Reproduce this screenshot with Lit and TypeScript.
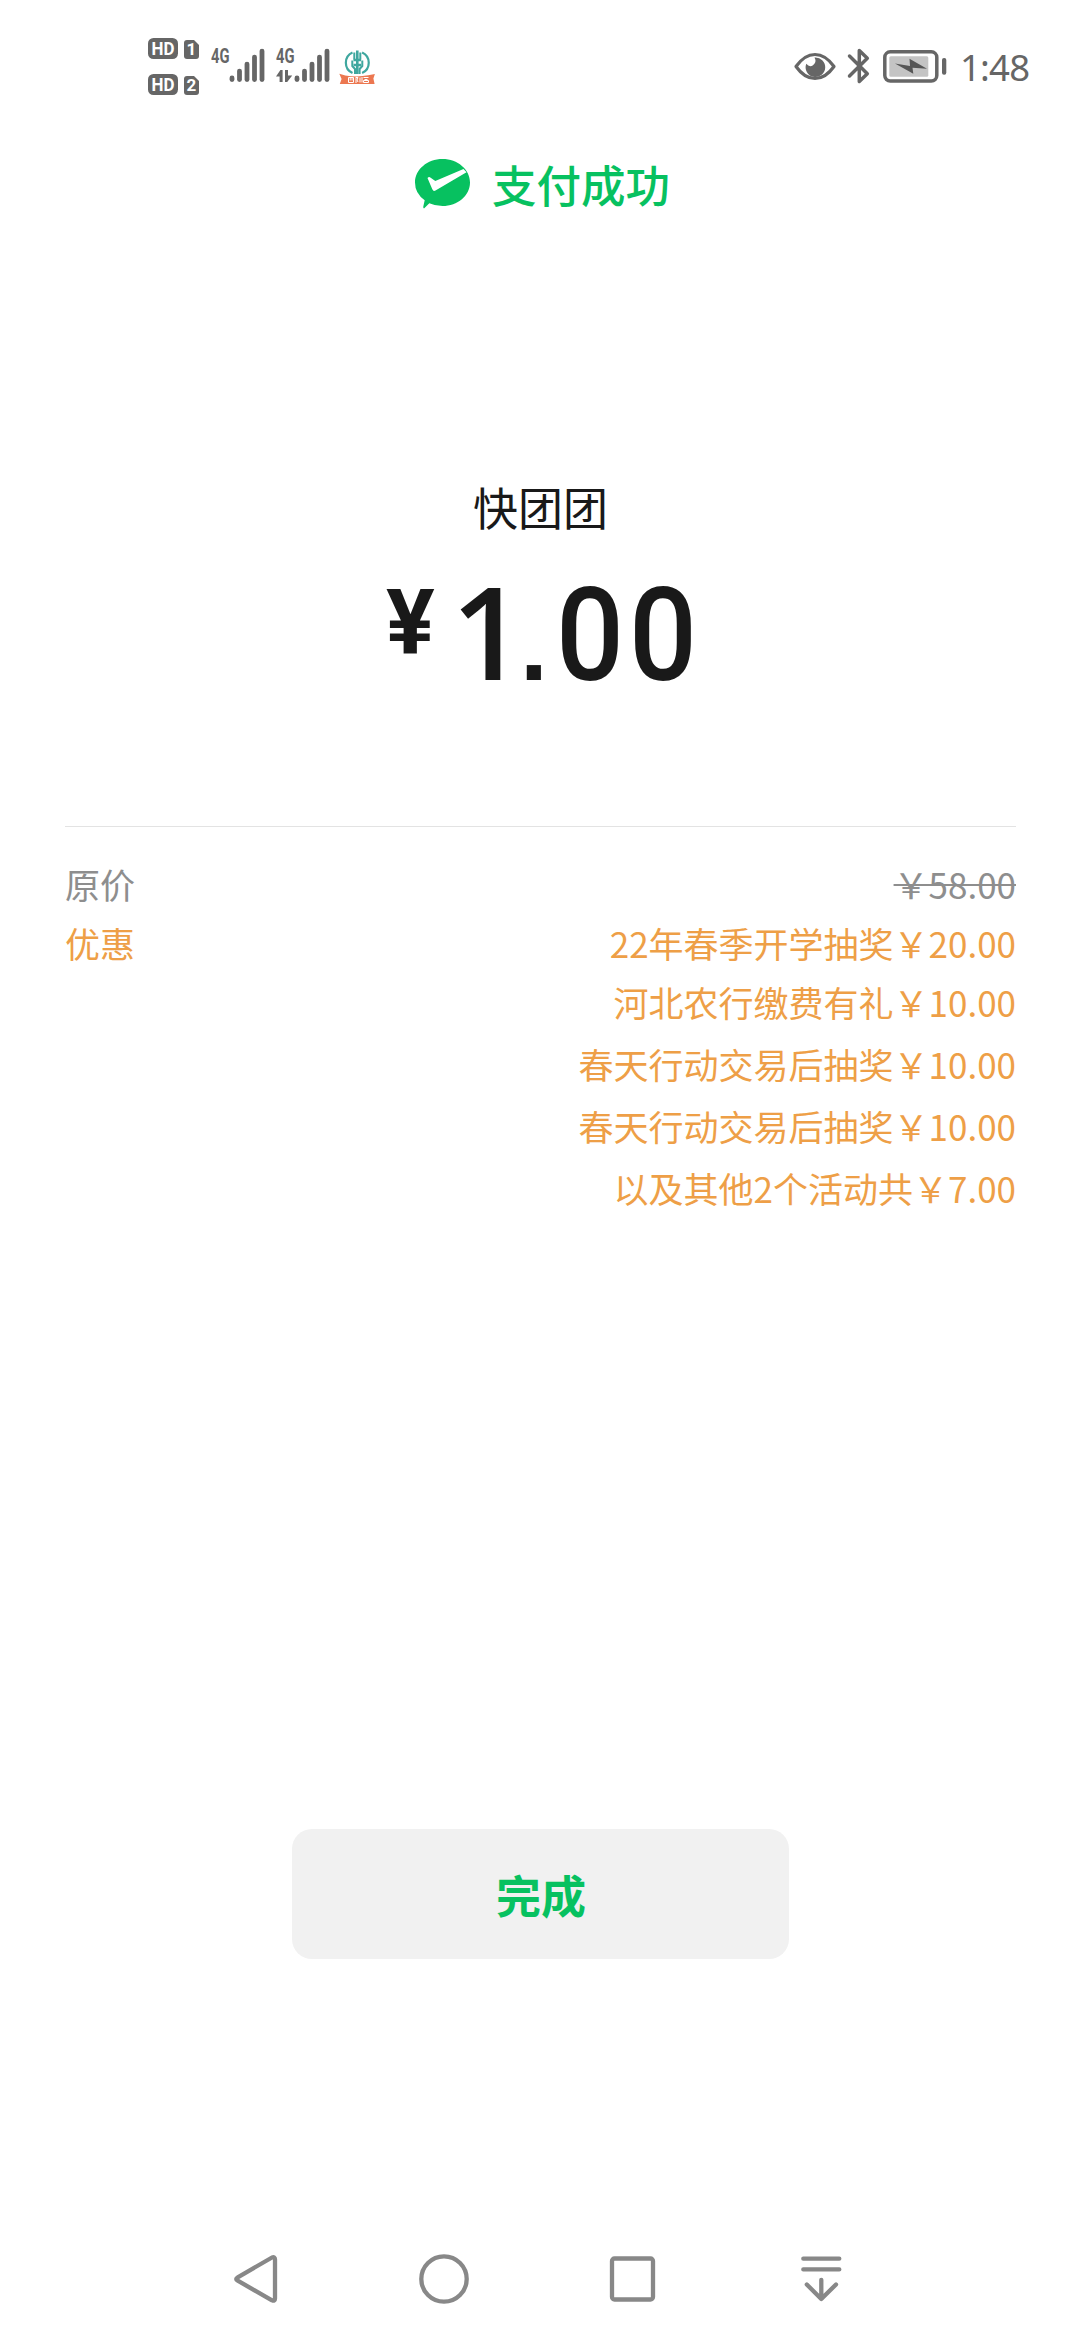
import { LitElement, html, css, svg } from "lit";
import { customElement, property } from "lit/decorators.js";

const CJK = css`"Noto Sans CJK SC", "Noto Sans", sans-serif`;

@customElement("status-bar")
class StatusBar extends LitElement {
  static styles = css`
    :host { display: flex; justify-content: space-between; height: 120px; padding: 0 51px 0 148px; box-sizing: border-box; }
    .side { display: flex; align-items: flex-start; padding-top: 36px; }
    svg { display: block; flex: none; }
    .label { font-family: "Roboto", sans-serif; font-weight: 700; }
    .signal { margin-left: 9px; }
    .signal + .signal { margin-left: 5px; }
    .bank { margin-left: 4px; }
    .bluetooth { margin-left: 11px; }
    .battery { margin-left: 12px; }
    .time { font: 400 36.5px/60px "Noto Sans", sans-serif; color: #666; margin: 1px 0 0 11px; letter-spacing: -0.8px; white-space: nowrap; width: 69px; }
  `;

  private sim(y: number, n: string) {
    return svg`
      <rect x="0" y=${y} width="30" height="21" rx="5.5" fill="#666"/>
      <text class="label" x="3.6" y=${y + 16.6} font-size="17.5" fill="#fff" textLength="23" lengthAdjust="spacingAndGlyphs">HD</text>
      <path d="M39 ${y + 2}h7l5 5v11a3 3 0 0 1-3 3h-9a3 3 0 0 1-3-3v-13a3 3 0 0 1 3-3z" fill="#666"/>
      <text class="label" x="43.5" y=${y + 17.4} font-size="17" fill="#fff" text-anchor="middle">${n}</text>`;
  }

  private signal(arrows: boolean) {
    const tops = [39.5, 32.7, 25.7, 18.7, 12.7];
    return html`<svg class="signal" width="60" height="60" viewBox="0 0 60 60">
      <text class="label" x="1" y="27.2" font-size="20" fill="#666" textLength="18.5" lengthAdjust="spacingAndGlyphs">4G</text>
      ${tops.map((t, i) => svg`<rect x=${19.6 + i * 7.5} y=${t} width="4.8" height=${46 - t} rx="2.4" fill="#666"/>`)}
      ${arrows ? svg`<path d="M7.6 46V34H5.4L1 40.5h3.6V46zM10 34v12h2.200l5-6.500h-4.200V34z" fill="#666"/>` : null}
    </svg>`;
  }

  render() {
    return html`
      <div class="side">
        <svg width="53" height="60" viewBox="0 0 53 60">${this.sim(2, "1")}${this.sim(38, "2")}</svg>
        ${this.signal(false)}${this.signal(true)}
        <svg class="bank" width="38" height="60" viewBox="0 0 38 60">
          <g fill="none" stroke="#3fa79f">
            <path d="M13.500 37A11.300 11.300 0 0 1 13.500 16.400M23.100 16.400A11.300 11.300 0 0 1 23.100 37" stroke-width="2.2"/>
            <path d="M18.300 14.500V38" stroke-width="2.6"/>
            <path d="M15.300 16.500V23.500M21.300 16.500V23.500" stroke-width="2"/>
            <path d="M13.300 24.500V30L16 33V38M23.300 24.500V30L20.600 33V38" stroke-width="2"/>
            <path d="M14.500 24h7.600M14.500 29h7.600" stroke-width="2.400"/>
          </g>
          <path d="M.3 37.7l6 1.8q12 2 23-.2l6.600-1.300-1.500 4.500 1.200 5.500H.8l1.800-5z" fill="#ec7750"/>
          <path d="M9.500 41.500h5v5h-5zM11.200 41.500v3M13 41.500v3M17 41v6M17 41.500h2l-1 2.500 1 2M21 41.500v5M23 41v5.500M24.500 41.500h5M25.500 43.500h3M24.500 46.500h5v-2h-5z" fill="none" stroke="#fff" stroke-width="1"/>
        </svg>
      </div>
      <div class="side">
        <svg width="42" height="60" viewBox="0 0 42 60">
          <path d="M2 30.500Q10.500 18.500 21 18.500T40 30.500Q31.500 42.500 21 42.500T2 30.500z" fill="none" stroke="#666" stroke-width="3.2" stroke-linejoin="round"/>
          <path d="M20.500 21.500A9.800 9.800 0 1 1 12.300 27.700Q15.500 31.700 19 29.200Q23 26 20.500 21.500z" fill="#666"/>
        </svg>
        <svg class="bluetooth" width="24" height="60" viewBox="0 0 24 60">
          <path d="M2.500 20L20.300 37.700 12.300 45.500V14.500L20.300 22.300 2.500 40" fill="none" stroke="#666" stroke-width="3.500" stroke-linejoin="round" stroke-linecap="round"/>
        </svg>
        <svg class="battery" width="66" height="60" viewBox="0 0 66 60">
          <rect x="1.800" y="15.800" width="52" height="29.300" rx="5.500" fill="none" stroke="#666" stroke-width="3.500"/>
          <rect x="6.300" y="20.200" width="39" height="20.600" rx="1.500" fill="#c4c4c4"/>
          <path d="M12 27.500L27 30 26.500 22.800 44 32.800 29.500 31.800 30.300 37.800z" fill="#555"/>
          <rect x="59" y="22" width="4.300" height="16.800" rx="2" fill="#666"/>
        </svg>
        <div class="time">1:48</div>
      </div>`;
  }
}

@customElement("pay-row")
class PayRow extends LitElement {
  @property() label = "";
  static styles = css`
    :host { display: flex; justify-content: space-between; font: 400 35px/59px ${CJK}; }
    .text { white-space: nowrap; }
  `;
  render() {
    return html`<span>${this.label}</span><span class="text"><slot></slot></span>`;
  }
}

@customElement("nav-bar")
class NavBar extends LitElement {
  static styles = css`
    :host { display: flex; justify-content: space-between; padding: 0 227px 0 224px; }
    svg { display: block; fill: none; stroke: #888; stroke-width: 4.3; stroke-linejoin: round; stroke-linecap: round; }
  `;
  render() {
    return html`
      <svg width="64" height="60" viewBox="0 0 64 60"><path d="M13.700 27.300L48 7.500Q51 6.500 51 9.500V48.500Q51 51.500 48 50.300L13.700 30.700Q10.700 29 13.700 27.300z"/></svg>
      <svg width="64" height="60" viewBox="0 0 64 60"><circle cx="32" cy="29" r="22.700"/></svg>
      <svg width="64" height="60" viewBox="0 0 64 60"><rect x="11" y="8.500" width="41" height="41" rx="2.500"/></svg>
      <svg width="64" height="60" viewBox="0 0 64 60"><path d="M14.300 8.700H50.300M14.300 19.400H50.300M32.300 29.800V48.500M17.800 34.500L32.300 49 47 34.500"/></svg>`;
  }
}

@customElement("app-root")
class AppRoot extends LitElement {
  static styles = css`
    :host { display: flex; flex-direction: column; width: 1080px; height: 2340px; background: #fff; font-family: ${CJK}; overflow: hidden; }
    .header { display: flex; align-items: center; justify-content: center; gap: 21px; height: 128px; padding-left: 4px; color: #07c160; font-size: 44.5px; font-weight: 500; line-height: 60px; }
    .header svg { display: block; }
    .merchant { margin-top: 229px; padding-left: 1px; text-align: center; font-size: 45px; line-height: 60px; color: #191919; }
    .amount { display: flex; align-items: flex-start; height: 130px; margin-top: 33px; padding-left: 386px; color: #191919; font-family: "Roboto", sans-serif; white-space: nowrap; }
    .yen { flex: none; width: 61px; font-size: 91px; line-height: 106px; font-weight: 700; }
    .num { display: flex; align-items: baseline; margin-top: -5px; font-size: 130px; line-height: 130px; font-weight: 500; }
    .one { width: 69px; padding-left: 4px; font-family: "Open Sans", "Noto Sans", sans-serif; font-size: 129px; font-weight: 600; }
    .dot { width: 32.5px; font: 700 100px/100px "Liberation Sans", Arial, sans-serif; }
    .zero { width: 73px; transform: scaleX(0.92); }
    .details { margin: 126px 64px 0 65px; border-top: 1px solid #e3e3e3; padding-top: 27px; }
    .details pay-row { color: #ee9f47; }
    .details .origin { color: #8e8e8e; }
    .origin s { text-decoration-thickness: 2px; }
    .details .spaced { margin-top: 3px; }
    .done { width: 497px; height: 130px; margin: 612px 0 0 292px; padding: 1px 0 0 1px; border: 0; border-radius: 20px; background: #f1f1f1; color: #07c160; font: 700 45px/60px ${CJK}; }
    nav-bar { margin-top: auto; margin-bottom: 30px; }
  `;

  render() {
    return html`
      <status-bar></status-bar>
      <div class="header">
        <svg width="57" height="54" viewBox="0 0 57 54">
          <path d="M28.500 2C43.700 2 56 12.500 56 25.500S43.700 49 28.500 49Q21 49 15.300 46.300L10 51.500Q9 51 9.300 49.500L10.700 43.200Q1 36.500 1 25.500C1 12.500 13.300 2 28.500 2z" fill="#07c160"/>
          <path d="M13.500 21Q15 19.500 16.300 20.500L21.300 24 49.500 12 52.500 15.300 21.500 33.500Q19.300 34.800 18.200 32z" fill="#fff"/>
        </svg>
        <span>支付成功</span>
      </div>
      <div class="merchant">快团团</div>
      <div class="amount"><span class="yen">¥</span><span class="num"><span class="one">1</span><span class="dot">.</span><span class="zero">0</span><span class="zero">0</span></span></div>
      <div class="details">
        <pay-row class="origin" label="原价"><s>￥58.00</s></pay-row>
        <pay-row label="优惠">22年春季开学抽奖￥20.00</pay-row>
        <pay-row>河北农行缴费有礼￥10.00</pay-row>
        <pay-row class="spaced">春天行动交易后抽奖￥10.00</pay-row>
        <pay-row class="spaced">春天行动交易后抽奖￥10.00</pay-row>
        <pay-row class="spaced">以及其他2个活动共￥7.00</pay-row>
      </div>
      <button class="done">完成</button>
      <nav-bar></nav-bar>`;
  }
}
